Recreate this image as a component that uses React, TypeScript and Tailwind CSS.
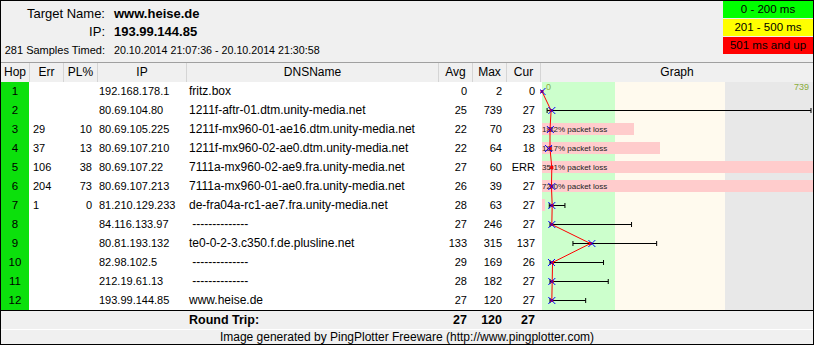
const HOPS = [
  { hop: 1, err: "", pl: "", ip: "192.168.178.1", dns: "fritz.box", avg: 0, max: 2, cur: "0" },
  { hop: 2, err: "", pl: "", ip: "80.69.104.80", dns: "1211f-aftr-01.dtm.unity-media.net", avg: 25, max: 739, cur: "27" },
  { hop: 3, err: "29", pl: "10", ip: "80.69.105.225", dns: "1211f-mx960-01-ae16.dtm.unity-media.net", avg: 22, max: 70, cur: "23" },
  { hop: 4, err: "37", pl: "13", ip: "80.69.107.210", dns: "1211f-mx960-02-ae0.dtm.unity-media.net", avg: 22, max: 64, cur: "18" },
  { hop: 5, err: "106", pl: "38", ip: "80.69.107.22", dns: "7111a-mx960-02-ae9.fra.unity-media.net", avg: 27, max: 60, cur: "ERR" },
  { hop: 6, err: "204", pl: "73", ip: "80.69.107.213", dns: "7111a-mx960-01-ae0.fra.unity-media.net", avg: 26, max: 39, cur: "27" },
  { hop: 7, err: "1", pl: "0", ip: "81.210.129.233", dns: "de-fra04a-rc1-ae7.fra.unity-media.net", avg: 28, max: 63, cur: "27" },
  { hop: 8, err: "", pl: "", ip: "84.116.133.97", dns: " --------------", avg: 27, max: 246, cur: "27" },
  { hop: 9, err: "", pl: "", ip: "80.81.193.132", dns: "te0-0-2-3.c350.f.de.plusline.net", avg: 133, max: 315, cur: "137" },
  { hop: 10, err: "", pl: "", ip: "82.98.102.5", dns: " --------------", avg: 29, max: 169, cur: "26" },
  { hop: 11, err: "", pl: "", ip: "212.19.61.13", dns: " --------------", avg: 28, max: 182, cur: "27" },
  { hop: 12, err: "", pl: "", ip: "193.99.144.85", dns: "www.heise.de", avg: 27, max: 120, cur: "27" },
];

// min/max whiskers drawn on the graph (hop index -> [min, max])
const WHISKERS: Record<number, [number, number]> = {
  1: [14, 739],
  6: [20, 63],
  7: [22, 246],
  8: [85, 315],
  9: [22, 169],
  10: [22, 182],
  11: [22, 120],
};

// packet loss bars (hop index -> width px, label, leading number)
const LOSS: Record<number, { w: number; label?: string; lead?: string }> = {
  2: { w: 92, label: "32% packet loss", lead: "18" },
  3: { w: 118, label: "17% packet loss", lead: "18" },
  4: { w: 271, label: "41% packet loss", lead: "35" },
  5: { w: 271, label: "90% packet loss", lead: "72" },
  6: { w: 3 },
};

const COLS = "grid grid-cols-[28px_34px_34px_89px_252px_34px_34px_34px]";
const ROW_H = 19;
const px = (v: number) => 2 + v * 0.364;
const cy = (i: number) => i * ROW_H + 9.5;

function Graph() {
  const pts = HOPS.map((h, i) => [px(h.avg), cy(i)] as const);
  return (
    <svg width={273} height={228} className="block">
      <rect x={2} y={0} width={73} height={228} fill="#ccffcc" />
      <rect x={75} y={0} width={110} height={228} fill="#fffaee" />
      <rect x={185} y={0} width={88} height={228} fill="#e8e8e8" />
      <text x={6} y={8} fontSize={9} fill="#8aad3c">0</text>
      <text x={269} y={8} fontSize={9} fill="#8aad3c" textAnchor="end">739</text>

      {Object.entries(LOSS).map(([k, b]) => {
        const i = Number(k);
        const top = i * ROW_H + 3;
        return (
          <g key={k}>
            <rect x={2} y={top} width={b.w} height={12} fill="#ffcccc" />
            {b.label && (
              <text y={top + 9} fontSize={8} fill="#222">
                <tspan x={2}>{b.lead}</tspan>
                <tspan x={9}>{b.label}</tspan>
              </text>
            )}
          </g>
        );
      })}

      {Object.entries(WHISKERS).map(([k, [mn, mx]]) => {
        const y = cy(Number(k));
        const a = px(mn);
        const b = Math.min(px(mx), 271.5);
        return (
          <g key={k} stroke="#000" strokeWidth={1}>
            <line x1={a} y1={y} x2={b} y2={y} />
            <line x1={a} y1={y - 2.5} x2={a} y2={y + 2.5} />
            <line x1={b} y1={y - 2.5} x2={b} y2={y + 2.5} />
          </g>
        );
      })}

      <polyline
        points={pts.map((p) => p.join(",")).join(" ")}
        fill="none"
        stroke="#ff0000"
        strokeWidth={1}
      />
      {pts.map(([x, y], i) => (
        <rect key={i} x={x - 1.5} y={y - 1.5} width={3} height={3} fill="#ff0000" />
      ))}

      {HOPS.map((h, i) => {
        if (h.cur === "ERR") return null;
        const x = px(Number(h.cur));
        const y = cy(i);
        return (
          <g key={i} stroke="#0000ff" strokeWidth={1}>
            <line x1={x - 3.5} y1={y - 3.5} x2={x + 3.5} y2={y + 3.5} />
            <line x1={x - 3.5} y1={y + 3.5} x2={x + 3.5} y2={y - 3.5} />
          </g>
        );
      })}
    </svg>
  );
}

export default function App() {
  return (
    <div className="w-[814px] h-[345px] border border-black bg-[#f0f0f0] text-black font-['Liberation_Sans',Arial,sans-serif] flex flex-col overflow-hidden">
      {/* target info + legend */}
      <div className="h-[61px] flex justify-between">
        <div className="grid grid-cols-[104px_auto] gap-x-[9px] pt-[4px] auto-rows-[18px] leading-[18px]">
          <div className="text-right text-[13px]">Target Name:</div>
          <div className="text-[13px] font-bold">www.heise.de</div>
          <div className="text-right text-[13px]">IP:</div>
          <div className="text-[13px] font-bold">193.99.144.85</div>
          <div className="text-right text-[11px]">281 Samples Timed:</div>
          <div className="text-[10.7px]">20.10.2014 21:07:36 - 20.10.2014 21:30:58</div>
        </div>
        <div className="flex flex-col gap-[1px] w-[90px] text-[11.5px] text-center leading-[17px]">
          <div className="h-[17px] bg-[#00ff00]">0 - 200 ms</div>
          <div className="h-[17px] bg-[#ffff00]">201 - 500 ms</div>
          <div className="h-[17px] bg-[#ff0000]">501 ms and up</div>
        </div>
      </div>

      {/* column headers */}
      <div className="flex border-t border-[#a0a0a0] h-[20px] text-[12px] leading-[19px]">
        <div className={COLS}>
          <div className="text-center">Hop</div>
          <div className="text-center border-l border-[#d5d5d5]">Err</div>
          <div className="text-center border-l border-[#d5d5d5]">PL%</div>
          <div className="text-center border-l border-[#d5d5d5]">IP</div>
          <div className="text-center border-l border-[#d5d5d5]">DNSName</div>
          <div className="text-center border-l border-[#d5d5d5]">Avg</div>
          <div className="text-center border-l border-[#d5d5d5]">Max</div>
          <div className="text-center border-l border-[#d5d5d5]">Cur</div>
        </div>
        <div className="flex-1 text-center border-l border-[#d5d5d5]">Graph</div>
      </div>

      {/* hops */}
      <div className="flex h-[228px] bg-white text-[11px]">
        <div className={`${COLS} auto-rows-[19px] leading-[19px]`}>
          {HOPS.map((h) => (
            <div key={h.hop} className="contents">
              <div className="bg-[#0ce00c] text-center text-[11.5px]">{h.hop}</div>
              <div className="pl-[4px]">{h.err}</div>
              <div className="text-right pr-[5px]">{h.pl}</div>
              <div className="pl-[2px] whitespace-nowrap">{h.ip}</div>
              <div className="pl-[3px] whitespace-pre text-[12px]">{h.dns}</div>
              <div className="text-right pr-[5px]">{h.avg}</div>
              <div className="text-right pr-[4px]">{h.max}</div>
              <div className="text-right pr-[5px]">{h.cur}</div>
            </div>
          ))}
        </div>
        <div className="flex-1">
          <Graph />
        </div>
      </div>

      {/* round trip */}
      <div className={`${COLS} border-t border-black h-[19px] leading-[18px] text-[12.5px] font-bold`}>
        <div />
        <div />
        <div />
        <div />
        <div className="pl-[3px]">Round Trip:</div>
        <div className="text-right pr-[5px]">27</div>
        <div className="text-right pr-[4px]">120</div>
        <div className="text-right pr-[5px]">27</div>
      </div>

      {/* footer */}
      <div className="border-t border-white h-[15px] leading-[14px] text-[12px] text-center">
        Image generated by PingPlotter Freeware (http://www.pingplotter.com)
      </div>
    </div>
  );
}
